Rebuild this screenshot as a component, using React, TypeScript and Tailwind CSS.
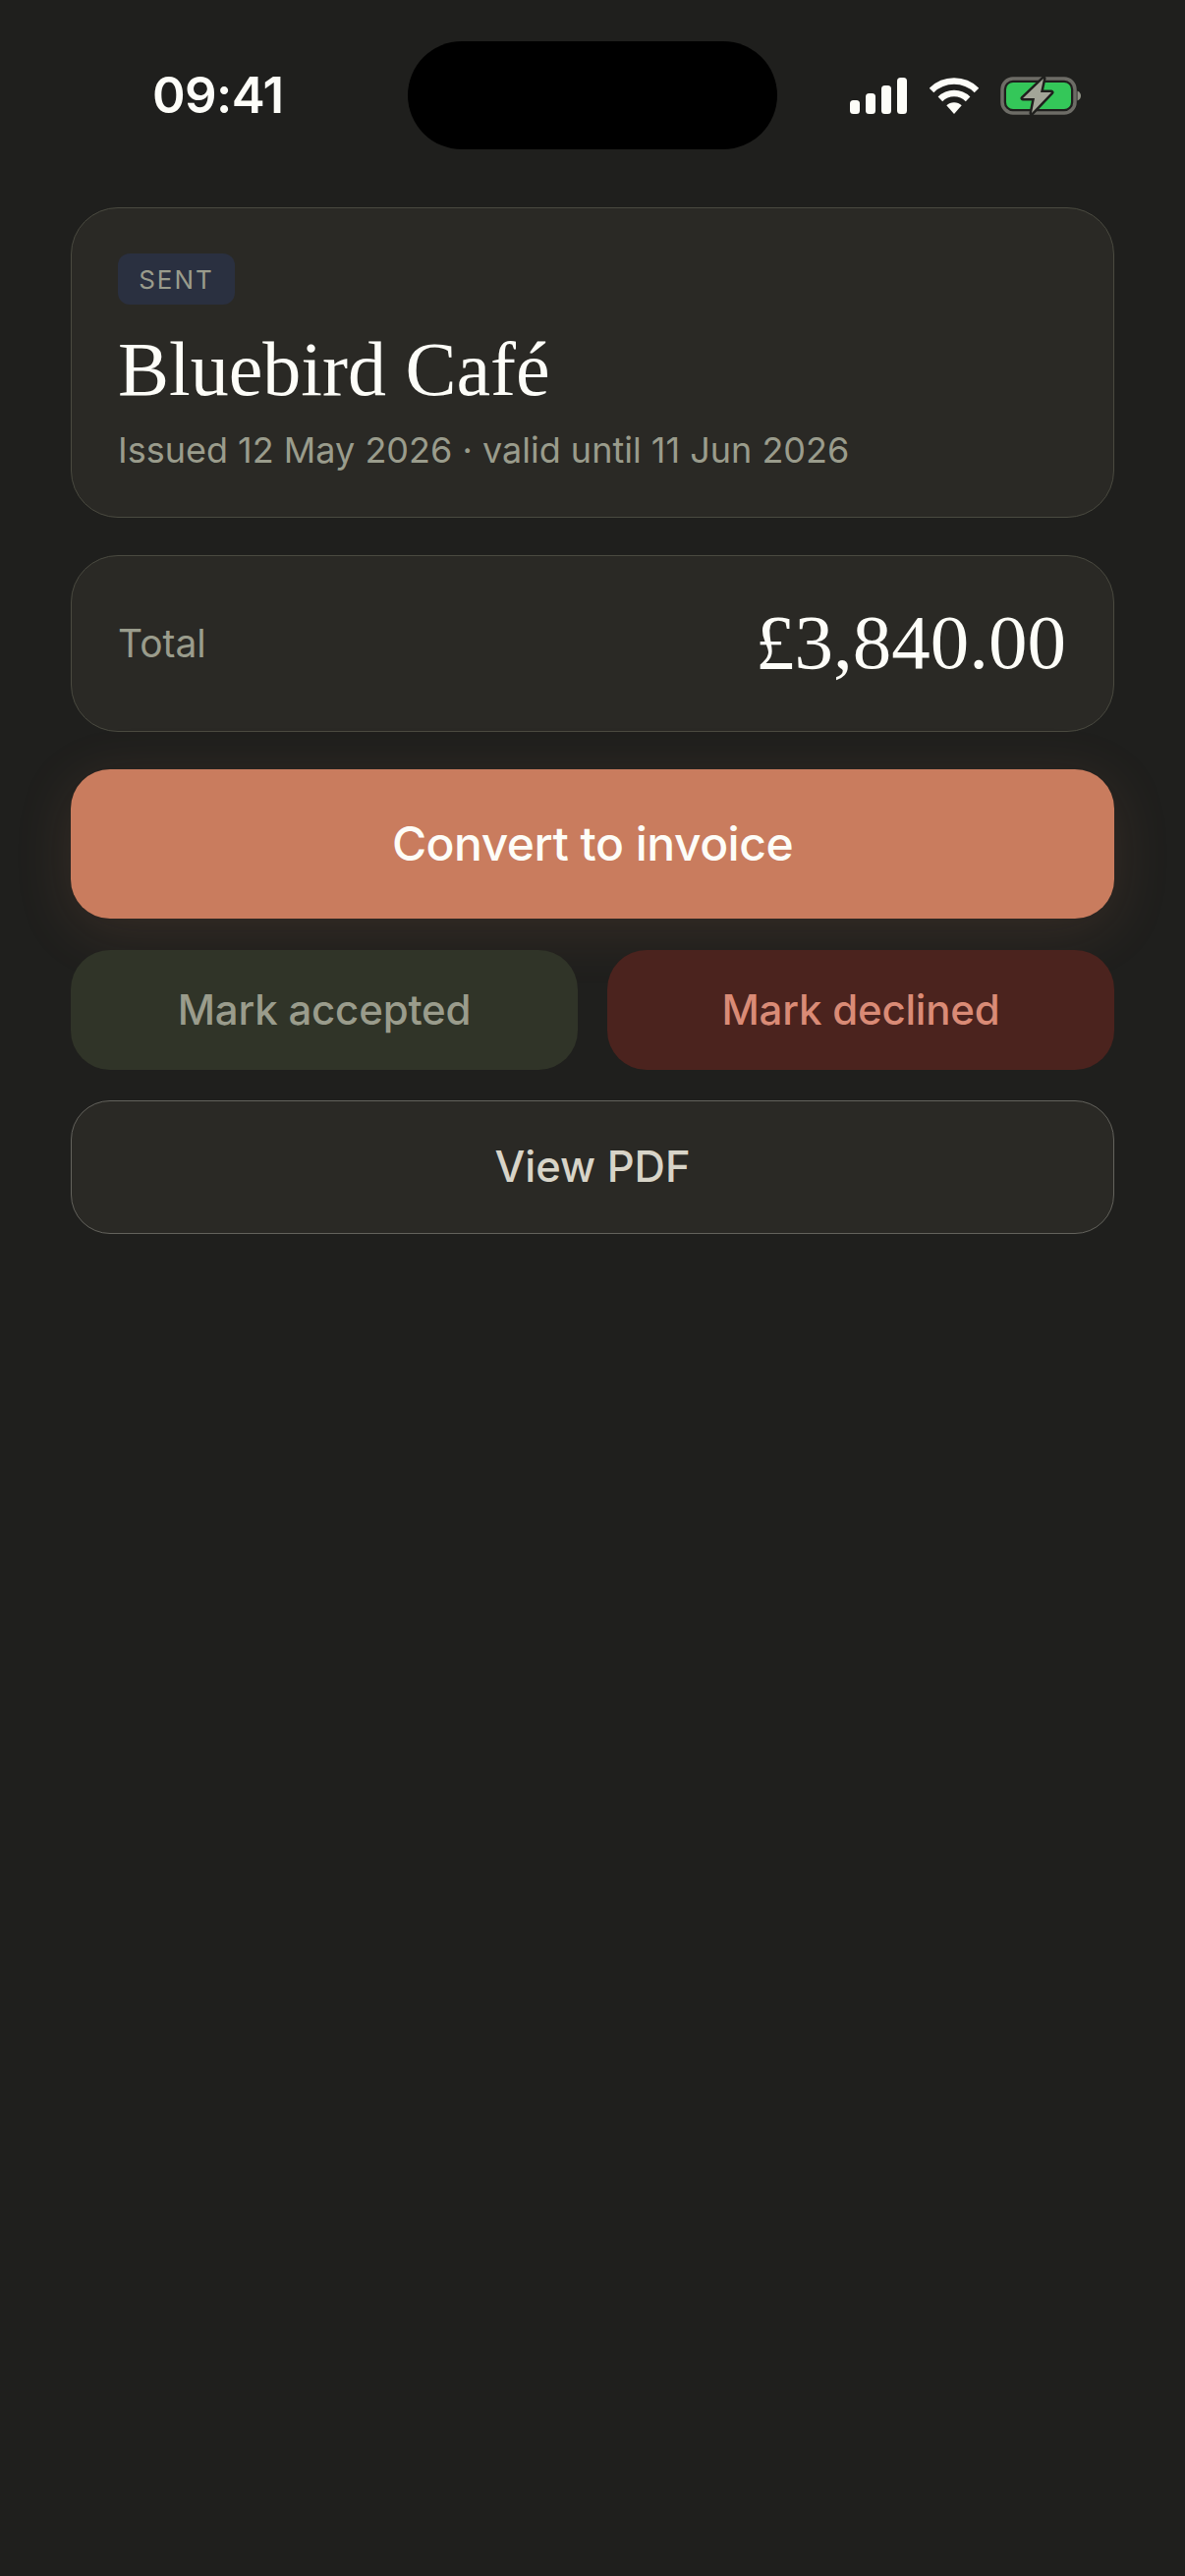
function SignalIcon() {
  return (
    <svg width="58" height="37" viewBox="0 0 58 37" fill="#fdfdf8">
      <rect x="0" y="23" width="10" height="14" rx="3.5" />
      <rect x="16" y="16" width="10" height="21" rx="3.5" />
      <rect x="32" y="8" width="10" height="29" rx="3.5" />
      <rect x="48" y="0" width="10" height="37" rx="3.5" />
    </svg>
  )
}

function WifiIcon() {
  return (
    <svg width="50" height="37" viewBox="0 0 50 37" fill="none" stroke="#fdfdf8" strokeWidth="6.5">
      <path d="M2 13A32.7 32.7 0 0 1 48 13" />
      <path d="M10.9 21.9A20 20 0 0 1 39.1 21.9" />
      <path d="M25 37L17.3 28.3A11 11 0 0 1 32.7 28.3Z" fill="#fdfdf8" stroke="none" />
    </svg>
  )
}

function BatteryIcon() {
  return (
    <svg width="82" height="39" viewBox="0 0 82 39" fill="none">
      <rect x="2" y="2" width="74" height="35" rx="11" stroke="#6d6c66" strokeWidth="3.5" />
      <rect x="6" y="6" width="66" height="27" rx="7" fill="#34c759" />
      <path d="M78.5 14.5C81 15.5 82 17.5 82 19.5C82 21.5 81 23.5 78.5 24.5Z" fill="#8f9085" />
      <path
        d="M44 2L23 22H35L32 37L52 16H41Z"
        fill="#a3a598"
        stroke="#1f1f1d"
        strokeWidth="5"
        strokeLinejoin="round"
        paintOrder="stroke"
      />
    </svg>
  )
}

export default function App() {
  return (
    <div className="min-h-[2622px] bg-[#1f1f1d] font-['Inter',sans-serif]">
      <div className="flex items-center pt-[42px]">
        <div className="w-[415px] pl-[155px] text-[51px] leading-[110px] font-semibold tracking-[-0.6px] text-[#fdfdf8]">
          09:41
        </div>
        <div className="h-[110px] w-[376px] rounded-full bg-black" />
        <div className="ml-[74px] flex items-center gap-[23px]">
          <SignalIcon />
          <WifiIcon />
          <div className="-ml-[1px]">
            <BatteryIcon />
          </div>
        </div>
      </div>

      <div className="mt-[59px] flex flex-col px-[72px]">
        <div className="h-[316px] rounded-[48px] border-[1.5px] border-[#4a4a40] bg-[#2a2925] px-[47px] pt-[46px]">
          <span className="flex h-[52px] w-[119px] items-center justify-center rounded-[12px] bg-[#2a3040] text-[26px] tracking-[2px] text-[#9a9c8c]">
            SENT
          </span>
          <h1 className="mt-[20px] font-['Liberation_Serif',serif] text-[78px] leading-[92px] text-[#fdfdf8]">
            Bluebird Café
          </h1>
          <p className="mt-[12px] text-[36px] leading-[48px] text-[#9a9c8c]">
            Issued 12 May 2026 · valid until 11 Jun 2026
          </p>
        </div>

        <div className="mt-[38px] flex h-[180px] items-center justify-between rounded-[48px] border-[1.5px] border-[#4a4a40] bg-[#2a2925] pr-[48px] pl-[47px]">
          <span className="text-[39px] text-[#9a9c8c]">Total</span>
          <span className="-mt-[2px] font-['Liberation_Serif',serif] text-[79px] text-[#fdfdf8]">£3,840.00</span>
        </div>

        <div className="mt-[38px] flex h-[152px] items-center justify-center rounded-[40px] bg-[#c97c5e] text-[48px] font-[550] tracking-[-0.5px] text-[#fdfdf8] shadow-[0_12px_60px_rgba(201,124,94,0.14)]">
          Convert to invoice
        </div>

        <div className="mt-[32px] grid grid-cols-2 gap-[30px]">
          <div className="flex h-[122px] items-center justify-center rounded-[40px] bg-[#303428] pb-[2px] text-[42px] font-[450] tracking-[-0.2px] text-[#9a9c8c]">
            Mark accepted
          </div>
          <div className="flex h-[122px] items-center justify-center rounded-[40px] bg-[#4b231e] pb-[2px] text-[42px] font-[450] tracking-[-0.2px] text-[#da8b76]">
            Mark declined
          </div>
        </div>

        <div className="mt-[31px] flex h-[136px] items-center justify-center rounded-[40px] border-[1.5px] border-[#63625c] bg-[#2a2925] text-[43.5px] font-medium text-[#d8d4c8]">
          View PDF
        </div>
      </div>
    </div>
  )
}
